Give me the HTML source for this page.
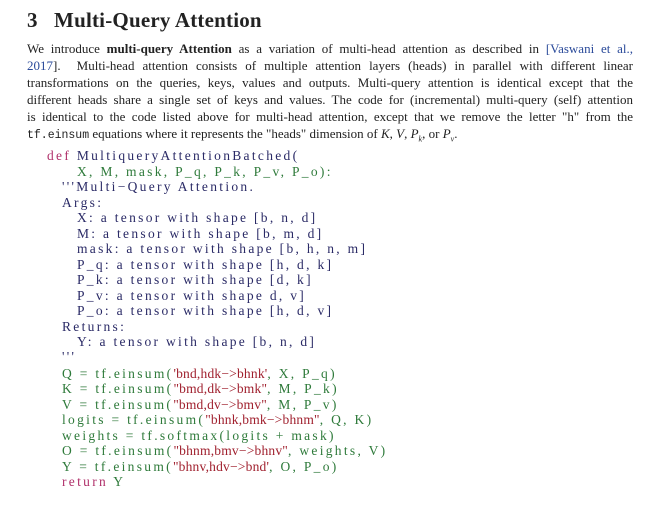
<!DOCTYPE html>
<html><head><meta charset="utf-8"><style>
body{margin:0;background:#fff;width:660px;height:513px;overflow:hidden;position:relative;font-family:"Liberation Serif",serif;color:#222}
h1{position:absolute;left:27px;top:8px;margin:0;font-size:21px;font-weight:bold;font-family:"Liberation Serif",serif;letter-spacing:.2px}
.p{position:absolute;left:27px;width:606px;font-size:13px;line-height:17px}
.l{display:block;text-align:justify;text-align-last:justify;height:17px;white-space:nowrap}
.l.last{text-align-last:left}
.b{color:#2a4a9a}
.tt{font-family:"Liberation Mono",monospace;font-size:11.5px}
.c{position:absolute;font-size:13.5px;letter-spacing:2.3px;white-space:pre;line-height:15px}
.k{color:#b0306a}.g{color:#2e7a3a}.d{color:#2a2a66}.s{color:#a0202e;letter-spacing:0.2px}
</style></head><body>
<h1>3&nbsp;&nbsp;&nbsp;Multi-Query Attention</h1>
<div class="p" style="top:40px">
<span class="l">We introduce <b>multi-query Attention</b> as a variation of multi-head attention as described in <span class="b">[Vaswani et al.,</span></span>
<span class="l"><span class="b">2017</span>].&nbsp; Multi-head attention consists of multiple attention layers (heads) in parallel with different linear</span>
<span class="l">transformations on the queries, keys, values and outputs. Multi-query attention is identical except that the</span>
<span class="l">different heads share a single set of keys and values. The code for (incremental) multi-query (self) attention</span>
<span class="l">is identical to the code listed above for multi-head attention, except that we remove the letter "h" from the</span>
<span class="l last"><span class="tt">tf.einsum</span> equations where it represents the "heads" dimension of <i>K</i>, <i>V</i>, <i>P<sub style="font-size:8px">k</sub></i>, or <i>P<sub style="font-size:8px">v</sub></i>.</span>
</div>
<div class="c k" style="left:47px;top:148px">def <span class="d">MultiqueryAttentionBatched(</span></div>
<div class="c g" style="left:77px;top:164px">X, M, mask, P_q, P_k, P_v, P_o):</div>
<div class="c d" style="left:62px;top:179px">'''Multi−Query Attention.</div>
<div class="c d" style="left:62px;top:195px">Args:</div>
<div class="c d" style="left:77px;top:210px">X: a tensor with shape [b, n, d]</div>
<div class="c d" style="left:77px;top:226px">M: a tensor with shape [b, m, d]</div>
<div class="c d" style="left:77px;top:241px">mask: a tensor with shape [b, h, n, m]</div>
<div class="c d" style="left:77px;top:257px">P_q: a tensor with shape [h, d, k]</div>
<div class="c d" style="left:77px;top:272px">P_k: a tensor with shape [d, k]</div>
<div class="c d" style="left:77px;top:288px">P_v: a tensor with shape d, v]</div>
<div class="c d" style="left:77px;top:303px">P_o: a tensor with shape [h, d, v]</div>
<div class="c d" style="left:62px;top:319px">Returns:</div>
<div class="c d" style="left:77px;top:334px">Y: a tensor with shape [b, n, d]</div>
<div class="c d" style="left:62px;top:349px">'''</div>
<div class="c g" style="left:62px;top:366px">Q = tf.einsum(<span class="s">'bnd,hdk−&gt;bhnk'</span>, X, P_q)</div>
<div class="c g" style="left:62px;top:381px">K = tf.einsum(<span class="s">"bmd,dk−&gt;bmk"</span>, M, P_k)</div>
<div class="c g" style="left:62px;top:397px">V = tf.einsum(<span class="s">"bmd,dv−&gt;bmv"</span>, M, P_v)</div>
<div class="c g" style="left:62px;top:412px">logits = tf.einsum(<span class="s">"bhnk,bmk−&gt;bhnm"</span>, Q, K)</div>
<div class="c g" style="left:62px;top:428px">weights = tf.softmax(logits + mask)</div>
<div class="c g" style="left:62px;top:443px">O = tf.einsum(<span class="s">"bhnm,bmv−&gt;bhnv"</span>, weights, V)</div>
<div class="c g" style="left:62px;top:459px">Y = tf.einsum(<span class="s">"bhnv,hdv−&gt;bnd'</span>, O, P_o)</div>
<div class="c k" style="left:62px;top:474px">return <span class="g">Y</span></div>
</body></html>
